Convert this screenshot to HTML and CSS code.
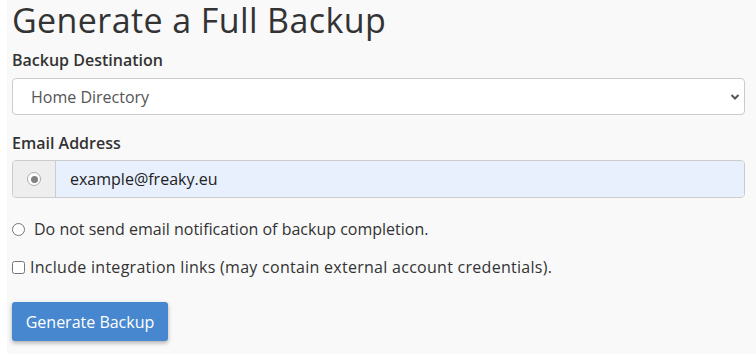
FILE: index.html
```html
<!DOCTYPE html>
<html lang="en">
<head>
    <meta charset="UTF-8">
    <title>Generate a Full Backup</title>
    <link rel="stylesheet" href="styles.css">
</head>
<body>

<main class="panel">
    <h1>Generate a Full Backup</h1>

    <form id="backupForm">
        <div class="field field-dest">
            <label for="destination">Backup Destination</label>
            <div class="select-wrap">
                <select id="destination">
                    <option>Home Directory</option>
                </select>
                <svg class="chevron" width="10" height="8" viewBox="0 0 10 8">
                    <path d="M1.5 2 L5 5.5 L8.5 2" fill="none" stroke="#555" stroke-width="2"/>
                </svg>
            </div>
        </div>

        <div class="field field-email">
            <label for="email">Email Address</label>
            <div class="input-group">
                <span class="addon"><input type="radio" name="notify" class="radio-grey" checked></span>
                <input type="text" id="email" value="example@freaky.eu">
            </div>
        </div>

        <label class="option option-radio">
            <input type="radio" name="notify"> Do not send email notification of backup completion.
        </label>

        <label class="option option-check">
            <input type="checkbox"> Include integration links (may contain external account credentials).
        </label>

        <button type="button">Generate Backup</button>
    </form>
</main>

</body>
</html>
```

FILE: styles.css
```css
body {
    margin: 0;
    background: #fff;
    font-family: 'Open Sans', sans-serif;
    color: #333;
}

.panel {
    margin-left: 7px;
    height: 354px;
    box-sizing: border-box;
    background: #f9f9f9;
    padding: 0 11px 0 5px;
}

h1 {
    margin: 0;
    padding-top: 1px;
    font-size: 34px;
    font-weight: 400;
    line-height: 39px;
    letter-spacing: 0.4px;
    color: #333;
}

.field label {
    display: block;
    font-size: 16px;
    font-weight: 600;
    line-height: 22px;
}

.field-dest {
    margin-top: 9px;
}

.field-dest label {
    margin-bottom: 7px;
}

.field-email {
    margin-top: 17px;
}

.field-email label {
    margin-bottom: 6px;
}

.select-wrap {
    position: relative;
}

select {
    appearance: none;
    width: 100%;
    height: 37px;
    padding: 0 18px;
    border: 1px solid #ccc;
    border-radius: 4px;
    background: #fff;
    font-family: inherit;
    font-size: 16px;
    color: #555;
}

.chevron {
    position: absolute;
    right: 5px;
    top: 15px;
}

.input-group {
    display: flex;
    height: 38px;
    border: 1px solid #ccc;
    border-radius: 4px;
    overflow: hidden;
    box-sizing: border-box;
}

.addon {
    width: 42px;
    background: #eee;
    border-right: 1px solid #ccc;
    display: flex;
    align-items: center;
    justify-content: center;
}

.radio-grey {
    appearance: none;
    margin: 0;
    width: 14px;
    height: 14px;
    border: 1px solid #aaa;
    border-radius: 50%;
    background: #fff;
    box-sizing: border-box;
    position: relative;
}

.radio-grey:checked::after {
    content: "";
    position: absolute;
    left: 2.5px;
    top: 2.5px;
    width: 7px;
    height: 7px;
    border-radius: 50%;
    background: #808080;
}

.input-group input[type="text"] {
    flex: 1;
    border: none;
    background: #e8f0fe;
    padding: 0 14px;
    font-family: inherit;
    font-size: 16px;
    color: #222;
    outline: none;
}

.option {
    display: flex;
    align-items: center;
    font-size: 16px;
    line-height: 22px;
}

.option input {
    margin: 0 6px 0 0;
    width: 13px;
    height: 13px;
}

.option-radio {
    margin-top: 20px;
}

.option-radio input {
    margin-right: 9px;
}

.option-check {
    margin-top: 16px;
    font-weight: 500;
    letter-spacing: 0.28px;
}

.option-check input {
    margin-right: 5px;
}

button {
    margin-top: 24px;
    width: 156px;
    height: 39px;
    background: #4787d0;
    color: #fff;
    border: none;
    border-radius: 3px;
    box-shadow: 0 2px 4px rgba(0, 0, 0, 0.3);
    font-family: inherit;
    font-size: 16px;
}
```
